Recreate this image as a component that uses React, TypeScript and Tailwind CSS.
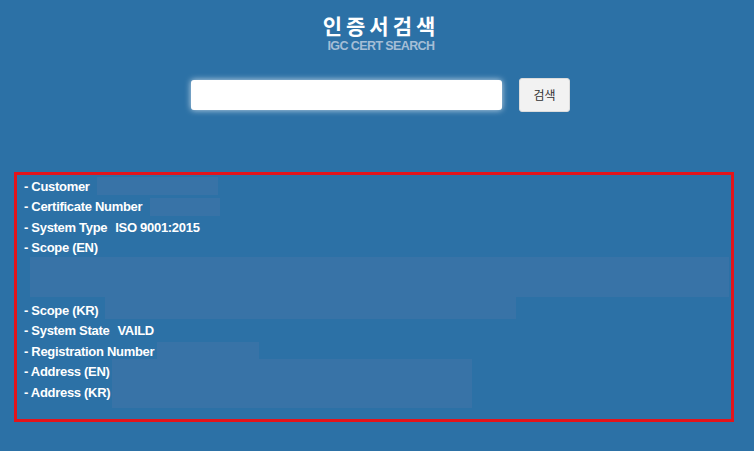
import { useState } from 'react'

const font = { fontFamily: '"Liberation Sans", "Noto Sans CJK KR", sans-serif' }

function Row({ label, children }: { label: string; children?: React.ReactNode }) {
  return (
    <div className="flex h-[20.5px] items-center">
      <span className="whitespace-nowrap">- {label}</span>
      {children}
    </div>
  )
}

export default function App() {
  const [query, setQuery] = useState('')

  return (
    <main
      className="min-h-[451px] w-[754px] bg-[#2c71a6] text-white"
      style={font}
    >
      {/* header */}
      <div className="flex flex-col items-center pl-[8px] pt-[10px]">
        <h1
          className="text-[21px] font-bold leading-[30px] tracking-[4px]"
          style={{ fontFamily: '"Noto Sans CJK KR", sans-serif' }}
        >
          인증서검색
        </h1>
        <p className="mt-[-1px] text-[12.5px] font-bold leading-[14px] tracking-[-0.6px] text-[#a5bed6]">
          IGC CERT SEARCH
        </p>
      </div>

      {/* search */}
      <div className="mt-[25px] flex items-center justify-center gap-[17px] pl-[7px]">
        <input
          type="text"
          value={query}
          onChange={(e) => setQuery(e.target.value)}
          className="h-[30px] w-[311px] rounded-[3px] bg-white px-2 text-sm text-black shadow-[0_0_6px_rgba(255,255,255,0.75)] outline-none"
        />
        <button
          type="button"
          className="h-[34px] w-[51px] rounded-[3px] border border-[#dcdcdc] bg-[#f2f2f2] text-[12px] text-[#333]"
          style={{ fontFamily: '"Noto Sans CJK KR", sans-serif' }}
        >
          검색
        </button>
      </div>

      {/* result */}
      <div className="ml-[14px] mr-[20px] mt-[60px] border-[3px] border-[#e3141b] pb-[11px] pl-[7px] pr-[2px] pt-[1px] text-[13px] font-bold tracking-[-0.3px]">
        <Row label="Customer">
          <div className="ml-[7px] h-[18px] w-[121px] bg-[#3873a7]" />
        </Row>
        <Row label="Certificate Number">
          <div className="ml-[8px] h-[18px] w-[70px] bg-[#3873a7]" />
        </Row>
        <Row label="System Type">
          <span className="ml-[8px]">ISO 9001:2015</span>
        </Row>
        <Row label="Scope (EN)" />
        <div className="ml-[6px] mt-[-1px] h-[40px] bg-[#3873a7]" />
        <div className="flex h-[23.5px] items-end">
          <div className="flex h-[20.5px] items-center">
            <span className="whitespace-nowrap">- Scope (KR)</span>
          </div>
          <div className="mb-[-1.5px] ml-[7px] h-[22px] w-[411px] self-start bg-[#3873a7]" />
        </div>
        <Row label="System State">
          <span className="ml-[8px]">VAILD</span>
        </Row>
        <Row label="Registration Number">
          <div className="ml-[3px] h-[19px] w-[102px] bg-[#3873a7]" />
        </Row>
        <div className="flex items-start">
          <div>
            <Row label="Address (EN)" />
            <Row label="Address (KR)" />
          </div>
          <div className="ml-[2px] mt-[-2.5px] h-[49px] w-[360px] bg-[#3873a7]" />
        </div>
      </div>
    </main>
  )
}
